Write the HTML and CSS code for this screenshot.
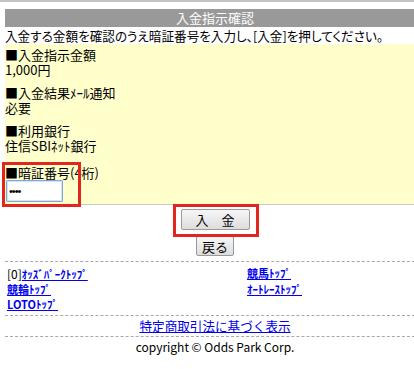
FILE: index.html
```html
<!DOCTYPE html>
<html lang="ja">

<head>
    <meta charset="UTF-8">
    <meta name="viewport" content="width=device-width, initial-scale=1.0">
    <title>入金指示確認</title>
    <link rel="stylesheet" href="styles.css">
</head>

<body>
    <div class="top-rule"></div>
    <div id="page">
        <h1 class="title-bar">入金指示確認</h1>
        <p class="lead">入金する金額を確認のうえ暗証番号を入力し、[入金]を押してください。</p>

        <form class="confirm-form" onsubmit="return false;">
            <div class="info-box">
                <div class="info-group">
                    <div>■入金指示金額</div>
                    <div>1,000円</div>
                </div>
                <div class="info-group">
                    <div>■入金結果ﾒｰﾙ通知</div>
                    <div>必要</div>
                </div>
                <div class="info-group">
                    <div>■利用銀行</div>
                    <div>住信SBIﾈｯﾄ銀行</div>
                </div>
                <div class="info-group pin-group">
                    <label for="pin">■暗証番号(4桁)</label>
                    <input type="password" id="pin" class="pin-input" value="1234" maxlength="4" autofocus>
                    <span class="mark mark-pin"></span>
                </div>
            </div>

            <div class="actions">
                <div class="submit-wrap">
                    <button type="submit" class="btn btn-submit">入　金</button>
                    <span class="mark mark-submit"></span>
                </div>
                <button type="button" class="btn btn-back">戻る</button>
            </div>
        </form>

        <div class="menu">
            <div><span class="key">[0]</span><a href="#">ｵｯｽﾞﾊﾟｰｸﾄｯﾌﾟ</a></div>
            <div><a href="#">競馬ﾄｯﾌﾟ</a></div>
            <div><a href="#">競輪ﾄｯﾌﾟ</a></div>
            <div><a href="#">ｵｰﾄﾚｰｽﾄｯﾌﾟ</a></div>
            <div><a href="#">LOTOﾄｯﾌﾟ</a></div>
        </div>

        <div class="law-link">
            <a href="#">特定商取引法に基づく表示</a>
        </div>

        <p class="copyright">copyright © Odds Park Corp.</p>
    </div>
</body>

</html>
```

FILE: styles.css
```css
html,
body {
    overflow-x: hidden;
}

body {
    margin: 0;
    font-family: "Noto Sans CJK JP", sans-serif;
    font-size: 13px;
    color: #000;
    background-color: #fff;
}

.top-rule {
    height: 2px;
    background-color: #c4c4c4;
}

/* the page is a little wider than the window, so centred items sit right of middle */
#page {
    width: 420px;
    margin-left: 5px;
    padding-top: 7px;
}

.title-bar {
    margin: 0;
    height: 18px;
    line-height: 18px;
    background-color: #999999;
    color: #fff;
    font-size: 13px;
    font-weight: normal;
    text-align: center;
}

.lead {
    margin: 0;
    height: 17px;
    line-height: 17px;
    font-size: 12.6px;
    font-feature-settings: "palt";
    white-space: nowrap;
}

.confirm-form {
    margin: 0;
}

.info-box {
    background-color: #ffffcc;
    border-bottom: 1px solid #c8c8c8;
    padding: 3px 0 2px;
    line-height: 15px;
}

.info-group {
    margin-bottom: 8px;
}

.pin-group {
    position: relative;
    margin-top: 12px;
    margin-bottom: 0;
}

.pin-group label {
    display: block;
}

.pin-input {
    display: block;
    box-sizing: border-box;
    width: 57px;
    height: 22px;
    margin: 0 0 0 1px;
    padding: 0 2px;
    border: 1px solid #7fa6d8;
    border-radius: 1px;
    box-shadow: inset 0 0 0 1px #d6e4f5;
    background-color: #fff;
    font-size: 11px;
    letter-spacing: -1px;
    outline: none;
}

.mark {
    position: absolute;
    border: 3px solid #e0261f;
    pointer-events: none;
}

.mark-pin {
    left: -3px;
    top: -3px;
    width: 73px;
    height: 39px;
}

.actions {
    display: flex;
    flex-direction: column;
    align-items: center;
    padding: 4px 0 5px;
    gap: 6px;
}

.submit-wrap {
    position: relative;
}

.mark-submit {
    left: -8px;
    top: -5px;
    width: 80px;
    height: 27px;
}

.btn {
    display: block;
    box-sizing: border-box;
    margin: 0;
    padding: 0;
    border: 1px solid #9a9a9a;
    border-radius: 2px;
    background: linear-gradient(#f6f6f6, #dddddd);
    font-family: "Noto Sans CJK JP", sans-serif;
    font-size: 13px;
    color: #000;
}

.btn-submit {
    width: 69px;
    height: 21px;
}

.btn-back {
    width: 38px;
    height: 20px;
}

.menu {
    display: grid;
    grid-template-columns: 240px 1fr;
    border-top: 1px dashed #a8a8a8;
    border-bottom: 1px dashed #a8a8a8;
    padding: 4px 2px 3px;
    font-size: 11px;
    line-height: 15px;
}

.key {
    color: #000;
    font-size: 12px;
}

.menu a {
    font-weight: bold;
}

.menu a,
.law-link a {
    color: #0000ee;
    text-decoration: underline;
}

.law-link {
    text-align: center;
    border-bottom: 1px dashed #a8a8a8;
    line-height: 20px;
    font-size: 12.6px;
}

.copyright {
    margin: 0;
    text-align: center;
    font-size: 12px;
    line-height: 20px;
}
```
